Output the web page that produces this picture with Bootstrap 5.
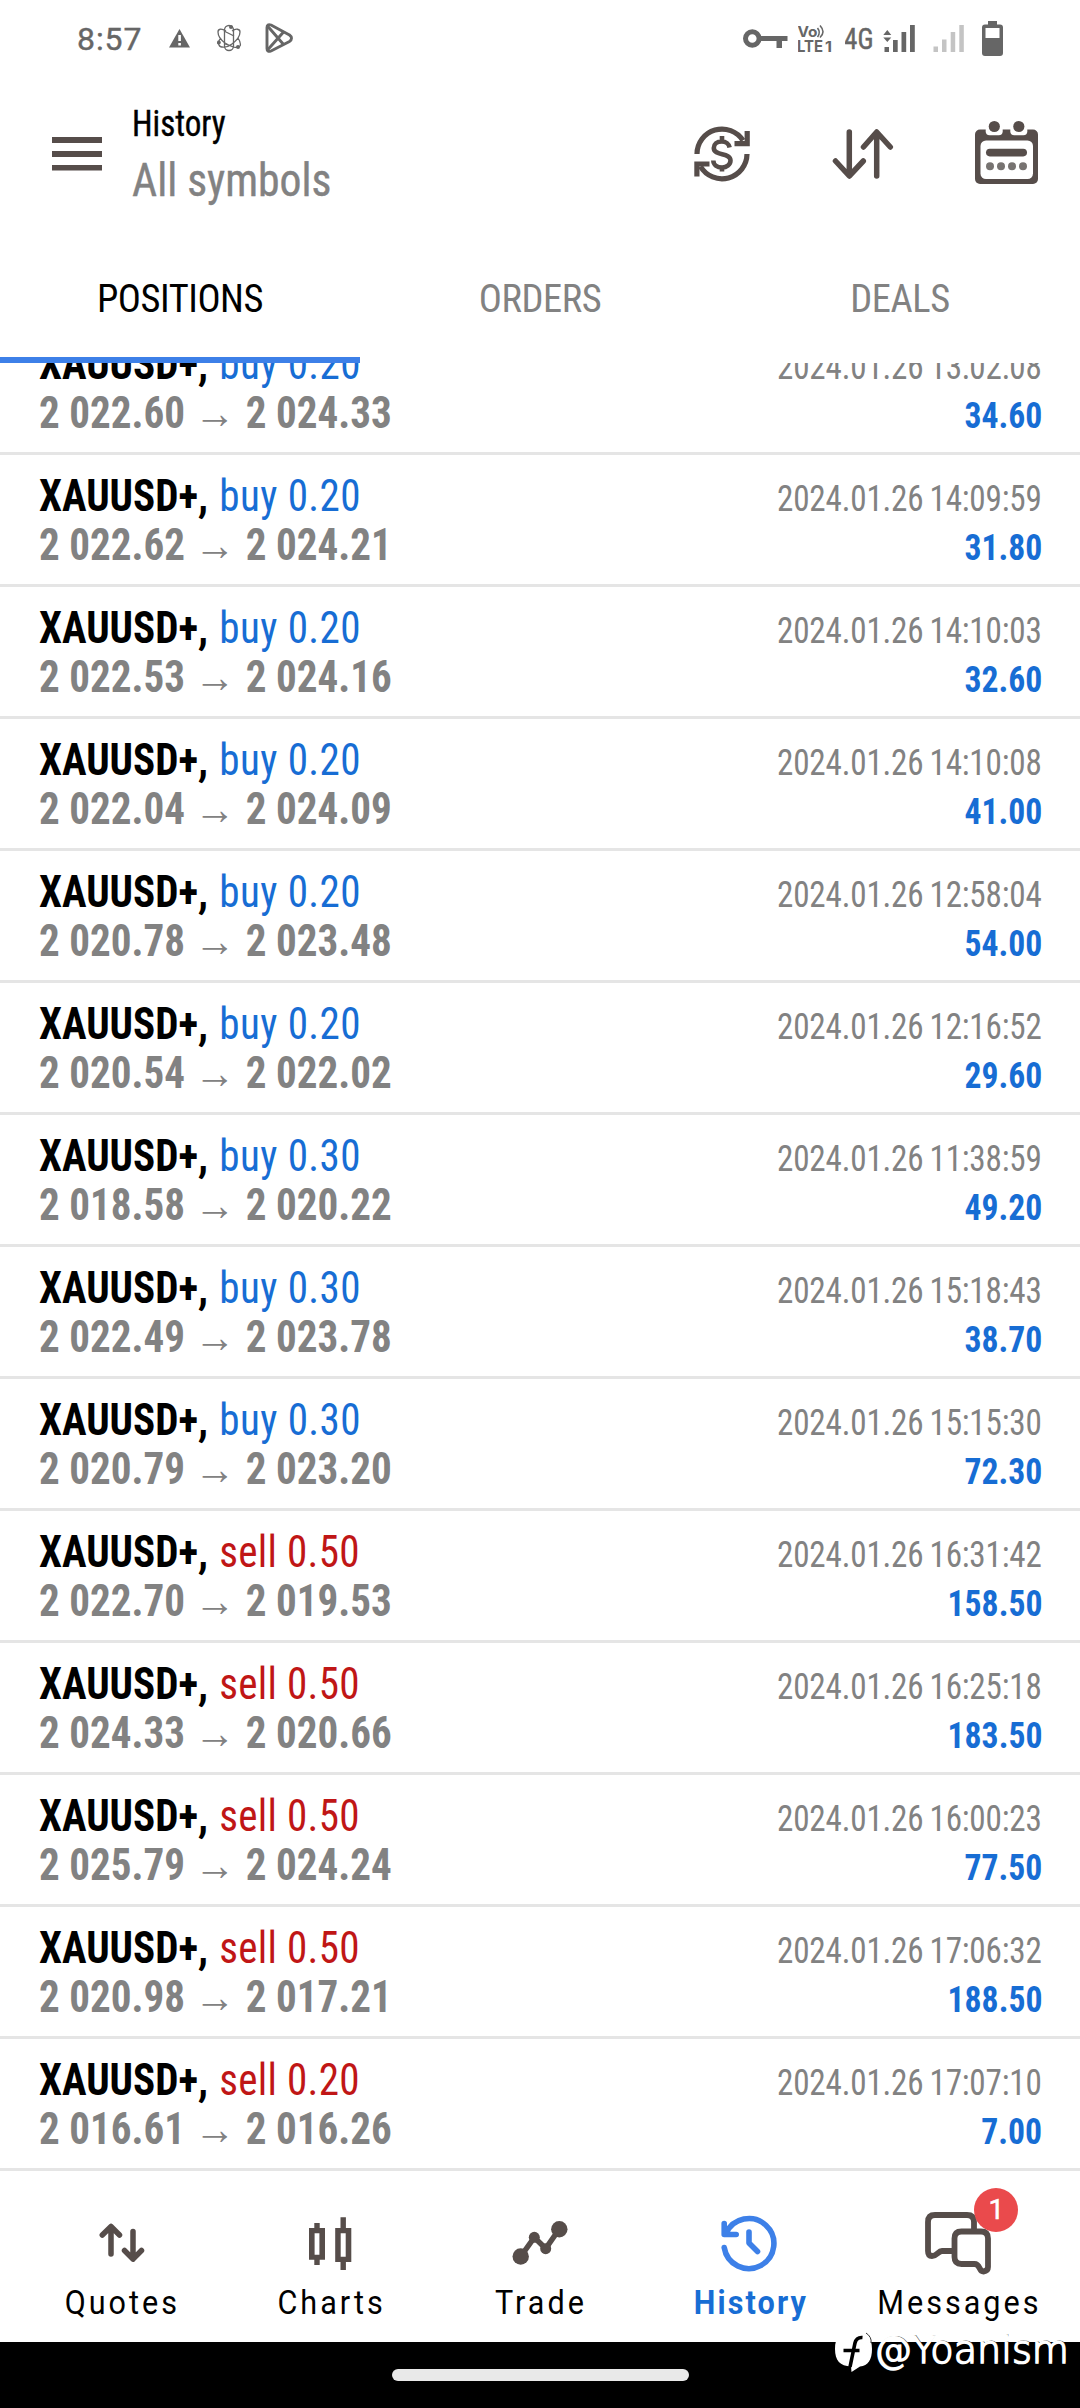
<!DOCTYPE html>
<html lang="en">
<head>
<meta charset="utf-8">
<meta name="viewport" content="width=device-width, initial-scale=1">
<title>History</title>
<link href="https://cdn.jsdelivr.net/npm/bootstrap@5.3.0/dist/css/bootstrap.min.css" rel="stylesheet">
<style>
  :root { --ink:#564d4a; --muted:#828282; --buy:#176dd4; --sell:#c01616; --accent:#3d80e8; --status:#666; }
  body { font-family:"Roboto Condensed", Roboto, sans-serif; color:#000; background:#fff; width:1080px; }
  svg { display:block; flex:none; }
  .screen { height:2408px; overflow:hidden; }
  .status-bar { height:80px; padding-left:77px; color:var(--status); font-family:Roboto, sans-serif; }
  .clock { width:92px; font-size:32px; line-height:38px; letter-spacing:.9px; font-weight:400; -webkit-text-stroke:.4px var(--status); padding-top:1px; }
  .app-bar { height:160px; }
  .titles { margin-left:30px; width:562px; padding-top:22px; }
  .title-main { font-size:36px; line-height:44px; transform:scaleX(.92); transform-origin:left; -webkit-text-stroke:.4px #000; }
  .title-sub { font-size:46.5px; line-height:54px; transform:scaleX(.938); transform-origin:left; color:var(--muted); padding-top:7px; -webkit-text-stroke:.4px var(--muted); }
  .tab-strip { height:123px; }
  .tab-strip .nav-link { height:123px; font-size:38.5px; line-height:46px; padding:36px 0 0; letter-spacing:-.45px; color:var(--muted); border-radius:0; }
  .tab-strip .nav-link.active { color:#000; border-bottom:6px solid var(--accent); }
  .deals { height:1808px; overflow:hidden; }
  .deal { height:132px; padding:18px 38px 0 39px; border-bottom:3px solid #e5e5e5; }
  .deal:first-child { margin-top:-40px; }
  .deal-line { height:48px; font-size:43.500px; line-height:48px; white-space:nowrap; }
  .lead-part { transform:scaleX(.944); transform-origin:left; }
  .symbol { font-weight:700; margin-right:12px; }
  .side { letter-spacing:.45px; }
  .buy { color:var(--buy); }
  .sell { color:var(--sell); letter-spacing:.3px; }
  .prices { color:var(--muted); font-weight:700; }
  .to { font-family:"Liberation Sans", sans-serif; font-weight:400; margin:0 11px 0 10px; }
  .when { color:var(--muted); font-size:36px; letter-spacing:-.2px; word-spacing:-1.5px; transform:scaleX(.92); transform-origin:right; }
  .profit { color:var(--buy); font-size:36px; font-weight:700; transform:scaleX(.935); transform-origin:right; }
  .bottom-nav { height:171px; padding:0 17px 0 16px; font-family:Roboto, sans-serif; }
  .bottom-nav .nav-link { padding:34px 0 0; font-size:32.5px; line-height:38px; letter-spacing:3.2px; color:#000; }
  .bottom-nav .nav-link.active { color:var(--buy); font-weight:700; letter-spacing:2.3px; }
  .nav-label { display:inline-block; transform:scaleX(.94); margin-right:-3px; }
  .icon-box { width:76px; margin:0 auto 3px; }
  .count { position:absolute; left:54px; top:-17px; width:44px; height:44px; line-height:44px; font-size:28px; letter-spacing:0; color:#fff; background:#ea4a4c; font-weight:400; -webkit-text-stroke:.5px #fff; }
  .gesture { height:66px; background:#000; padding-top:27px; }
  .pill { width:297px; height:12px; background:#e9e9e9; }
  .credit { position:absolute; left:834px; top:2328px; height:44px; color:#fff; }
  .credit span { font-family:"DejaVu Sans", sans-serif; font-weight:200; font-size:38px; line-height:44px; letter-spacing:.1px; margin-left:0; -webkit-text-stroke:1.6px #fff; text-shadow:1px -1px 0 #555; }
</style>
</head>
<body>
<div class="screen position-relative d-flex flex-column">
  <header class="status-bar d-flex align-items-start">
    <div class="clock mt-3 pt-1">8:57</div>
    <svg width="48" height="80" viewBox="169 0 48 80"><path d="M179.500 29L190 47.500H169z" fill="#666"/><path d="M179.600 35v6M179.600 43v2.500" stroke="#fff" stroke-width="2.600"/></svg>
    <svg width="48" height="80" viewBox="217 0 48 80" fill="none" stroke="#666" stroke-width="1.300"><rect x="224.500" y="25.500" width="9" height="25" rx="4.500"/><path d="M226 31c-5-3-8-2-8 1 0 4 3 8 7 11 6 4 13 6 15 3 1-2 0-5-2-8M232 31c4-3 8-2 8 1 0 5-4 9-8 12-5 4-12 4-13 1-1-2 0-5 2-7M224 31l10 5M225 44l9 3"/><g fill="#666" stroke="none"><circle cx="231" cy="27" r="2"/><circle cx="218.800" cy="42.500" r="2"/><circle cx="238" cy="47" r="2"/></g></svg>
    <svg width="28" height="80" viewBox="265 0 28 80" fill="none" stroke="#666" stroke-width="2.900" stroke-linejoin="round"><path d="M267 27.500q0-4 4-2.500L289.500 35q4 3 0 6.500L271 51q-4 1.500-4-2.500z"/><path d="M267.500 26L284 45M267.500 50L284 31.500"/></svg>

    <svg class="ms-auto" width="55" height="80" viewBox="743 0 55 80"><circle cx="752.300" cy="38.500" r="6.800" fill="none" stroke="#666" stroke-width="5"/><path d="M760 36h27.500v5h-5.500v7h-5.500v-7H760z" fill="#666"/></svg>
    <svg width="47" height="80" viewBox="798 0 47 80" fill="#666" font-family="Inter, sans-serif" font-weight="700"><text x="797.500" y="37" font-size="14" textLength="20" lengthAdjust="spacingAndGlyphs">Vo</text><text x="797" y="52.300" font-size="16.500" textLength="26" lengthAdjust="spacingAndGlyphs">LTE</text><text x="825" y="52.300" font-size="14" textLength="7" lengthAdjust="spacingAndGlyphs">1</text><path d="M817.500 28q3.500 4.500 0 9M820 25.500q6 6.500 0 12" fill="none" stroke="#666" stroke-width="1.600"/></svg>
    <svg width="38" height="80" viewBox="845 0 38 80" fill="#666"><text x="844" y="49" font-family="Roboto Condensed, sans-serif" font-size="30" stroke="#666" stroke-width=".4" textLength="29.500" lengthAdjust="spacingAndGlyphs">4G</text></svg>
    <svg width="50" height="80" viewBox="883 0 50 80" fill="#666"><path d="M884.500 47h4.500v5h-4.500zM893 40h4.700v12H893zM901.500 32h4.700v20h-4.700zM910 25h4.800v27H910zM887.300 30l4 5h-8zM887.300 42l-4-4.500h8z"/></svg>
    <svg width="49" height="80" viewBox="933 0 49 80" fill="#c4c4c4"><path d="M933.500 46.500h4.500V52h-4.500zM942 39.500h4.500V52H942zM950.700 32h4.500v20h-4.500zM959.300 25h4.500v27h-4.500z"/></svg>
    <svg width="98" height="80" viewBox="982 0 98 80"><path d="M988 21h9v3.500h3q3 0 3 3V53q0 3-3 3h-15q-3 0-3-3V27.500q0-3 3-3h3z" fill="#666"/><path d="M985.500 28h14v10h-14z" fill="#fff"/></svg>
  </header>

  <div class="app-bar d-flex">
    <svg width="102" height="160" viewBox="0 80 102 160" fill="#564d4a"><path d="M52 137h50v6H52zM52 151h50v6H52zM52 165h50v5.500H52z"/></svg>
    <div class="titles">
      <div class="title-main">History</div>
      <div class="title-sub">All symbols</div>
    </div>
    <svg width="56" height="160" viewBox="694 80 56 160" fill="none" stroke="#564d4a" stroke-width="5.200"><path d="M697 154A25 25 0 0 1 743 140.500M747 154A25 25 0 0 1 700.500 166.500"/><path d="M747.200 131v12.600H734.500M696.900 176.500V164H709.500"/><path d="M729.600 147.500C729 144 726 141.500 721.800 141.500c-4.800 0-8 2.800-8 6.500 0 8.500 16.700 4 16.700 12.500 0 4-3.800 7-8.400 7-5 0-8.600-2.700-8.800-7M722 136v6M722 167v4.500" stroke-width="4.600"/></svg>
    <svg class="ms-auto" width="62" height="160" viewBox="834 80 62 160" fill="none" stroke="#564d4a" stroke-width="5.500" stroke-linecap="round" stroke-linejoin="round"><path d="M851.300 132v43.500M837.500 161l13.800 15 14-15M878.700 176v-43.500M865.500 147l13.200-15 13.600 15"/></svg>
    <svg class="ms-auto" width="105" height="160" viewBox="975 80 105 160"><rect x="975" y="129.500" width="63" height="54.500" rx="5" fill="#564d4a"/><rect x="985.700" y="122" width="17" height="13.200" rx="4" fill="#fff"/><rect x="1010.300" y="122" width="17" height="13.200" rx="4" fill="#fff"/><rect x="980.500" y="140.500" width="52.500" height="38.500" rx="5.500" fill="#fff"/><g fill="#564d4a"><circle cx="994.300" cy="126.500" r="5.600"/><circle cx="1018.800" cy="126.500" r="5.600"/><rect x="986" y="148.800" width="41" height="7.600" rx="3.800"/></g><g fill="#777371"><circle cx="990" cy="166.300" r="4"/><circle cx="1001" cy="166.300" r="4"/><circle cx="1012" cy="166.300" r="4"/><circle cx="1023" cy="166.300" r="4"/></g></svg>
  </div>

  <nav class="tab-strip nav nav-justified">
    <a class="nav-link active" href="#">POSITIONS</a>
    <a class="nav-link" href="#">ORDERS</a>
    <a class="nav-link" href="#">DEALS</a>
  </nav>

  <main class="deals" id="deals"></main>

  <nav class="bottom-nav nav nav-justified flex-nowrap">
    <a class="nav-link" href="#"><div class="icon-box"><svg width="76" height="76" viewBox="83 2205 76 76" fill="none" stroke="#564d4a" stroke-width="5.500" stroke-linecap="round" stroke-linejoin="round"><path d="M111 2254v-27M102.300 2235l8.700-8.500 8.500 8.500M133 2231.500v27.500M124.500 2250.500l8.500 8.700 8.500-8.700"/></svg></div><span class="nav-label">Quotes</span></a>
    <a class="nav-link" href="#"><div class="icon-box"><svg width="76" height="76" viewBox="293 2205 76 76" fill="#564d4a" fill-rule="evenodd"><path d="M315.300 2223h5.400v5h5.300v31.700h-5.300v5.300h-5.400v-5.300H310V2228h5.300zM315.600 2233.200v21.600h4.800v-21.600zM341.500 2217.300h5.400V2228h5.400v34h-5.400v8h-5.400v-8h-5.300v-34h5.300zM341.700 2233.200v23.600h5v-23.600z"/></svg></div><span class="nav-label">Charts</span></a>
    <a class="nav-link" href="#"><div class="icon-box"><svg width="76" height="76" viewBox="502 2205 76 76" fill="#564d4a"><path d="M520.700 2256.500l13.600-19 11.400 11 13.600-19.500" fill="none" stroke="#564d4a" stroke-width="5.500"/><circle cx="520.700" cy="2256.500" r="8.200"/><circle cx="534.300" cy="2237.300" r="5.500"/><circle cx="545.700" cy="2248.700" r="5.500"/><circle cx="559.300" cy="2229.200" r="8.200"/></svg></div><span class="nav-label">Trade</span></a>
    <a class="nav-link active" href="#"><div class="icon-box"><svg width="76" height="76" viewBox="711 2205 76 76" fill="none" stroke="#3d80e8" stroke-width="5.600" stroke-linecap="round" stroke-linejoin="round"><path d="M724.200 2247.500A25 25 0 1 0 726 2233.500M724.200 2223.500v11h12M749 2232v11l8.500 8.500"/></svg></div><span class="nav-label">History</span></a>
    <a class="nav-link" href="#"><div class="icon-box position-relative"><svg width="76" height="76" viewBox="920 2205 76 76" fill="none" stroke="#564d4a" stroke-width="5.800" stroke-linecap="round" stroke-linejoin="round"><path d="M952 2251h-10c-4 0-5 5-10 5q-4 0-4-5v-29q0-7 7-7h32q7 0 7 7v9"/><path d="M961.500 2231.500h19.500q7 0 7 7v28.500q0 4-4.500 4.500c-5 0-3-7.500-9-7.500h-13q-7 0-7-7v-18.500q0-7 7-7z"/></svg><span class="count rounded-circle text-center">1</span></div><span class="nav-label">Messages</span></a>
  </nav>

  <footer class="gesture"><div class="pill rounded-pill mx-auto"></div></footer>

  <div class="credit d-flex">
    <svg width="40" height="44" viewBox="834 2328 40 44"><path d="M853.500 2331c13 0 18.500 6 18.500 18 0 11-4 16.500-12 17.500l-8.500 5.500-.5-5.500c-11-.5-16-6-16-17.500 0-12 5-18 18.500-18z" fill="#fff"/><path d="M850 2367l5-24q1.500-6 7.500-5.500M843.500 2350.500h16" fill="none" stroke="#000" stroke-width="3.600"/><path d="M866 2333q6 4 5 10" fill="none" stroke="#333" stroke-width="1"/></svg>
    <span>@Yoanism</span>
  </div>
</div>

<script>
  const deals = [
    ["buy", "0.20", "2 022.60", "2 024.33", "13:02:08", "34.60"],
    ["buy", "0.20", "2 022.62", "2 024.21", "14:09:59", "31.80"],
    ["buy", "0.20", "2 022.53", "2 024.16", "14:10:03", "32.60"],
    ["buy", "0.20", "2 022.04", "2 024.09", "14:10:08", "41.00"],
    ["buy", "0.20", "2 020.78", "2 023.48", "12:58:04", "54.00"],
    ["buy", "0.20", "2 020.54", "2 022.02", "12:16:52", "29.60"],
    ["buy", "0.30", "2 018.58", "2 020.22", "11:38:59", "49.20"],
    ["buy", "0.30", "2 022.49", "2 023.78", "15:18:43", "38.70"],
    ["buy", "0.30", "2 020.79", "2 023.20", "15:15:30", "72.30"],
    ["sell", "0.50", "2 022.70", "2 019.53", "16:31:42", "158.50"],
    ["sell", "0.50", "2 024.33", "2 020.66", "16:25:18", "183.50"],
    ["sell", "0.50", "2 025.79", "2 024.24", "16:00:23", "77.50"],
    ["sell", "0.50", "2 020.98", "2 017.21", "17:06:32", "188.50"],
    ["sell", "0.20", "2 016.61", "2 016.26", "17:07:10", "7.00"]
  ];
  document.getElementById("deals").innerHTML = deals.map(([side, lots, open, close, time, profit]) => `
    <div class="deal">
      <div class="deal-line d-flex align-items-baseline">
        <span class="lead-part d-flex align-items-baseline"><span class="symbol">XAUUSD+,</span><span class="side ${side}">${side} ${lots}</span></span>
        <span class="when ms-auto">2024.01.26 ${time}</span>
      </div>
      <div class="deal-line d-flex align-items-baseline">
        <span class="lead-part prices d-flex align-items-baseline"><span>${open}</span><span class="to">→</span><span>${close}</span></span>
        <span class="profit ms-auto">${profit}</span>
      </div>
    </div>`).join("");
</script>
<script src="https://cdn.jsdelivr.net/npm/bootstrap@5.3.0/dist/js/bootstrap.bundle.min.js"></script>
</body>
</html>
